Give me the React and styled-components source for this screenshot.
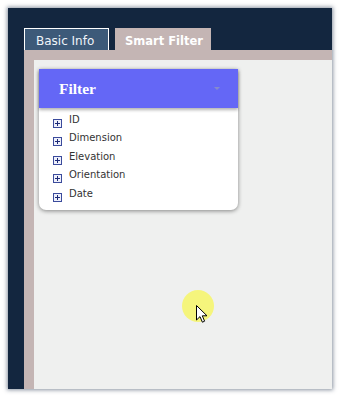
import React from "react";
import styled, { createGlobalStyle } from "styled-components";

const GlobalStyle = createGlobalStyle`
  html, body {
    margin: 0;
    padding: 0;
    background: #ffffff;
  }
  #root {
    width: 340px;
    height: 395px;
    overflow: hidden;
  }
`;

const Window = styled.div`
  position: relative;
  margin: 8px 0 0 8px;
  width: 324px;
  height: 381px;
  background: #13263f;
  box-shadow: 0 0 4px 1px rgba(19, 38, 63, 0.5);
  display: flex;
  flex-direction: column;
  padding: 20px 0 0 16px;
  box-sizing: border-box;
`;

const TabBar = styled.div`
  display: flex;
  gap: 6px;
  height: 22px;
`;

const Tab = styled.div`
  box-sizing: border-box;
  width: ${(p) => p.width};
  height: 22px;
  display: flex;
  align-items: flex-end;
  padding: 0 0 2px ${(p) => p.pad || "11px"};
  font-family: "DejaVu Sans", Verdana, sans-serif;
  font-size: ${(p) => (p.active ? "11.5px" : "12px")};
  font-weight: ${(p) => (p.active ? 700 : 400)};
  color: ${(p) => (p.active ? "#ffffff" : "#f0f5fa")};
  background: ${(p) => (p.active ? "#c4b5b4" : "#3d5a79")};
  border: ${(p) => (p.active ? "none" : "1px solid #ffffff")};
  border-bottom: none;
`;

const Panel = styled.div`
  flex: 1;
  background: #c4b5b4;
  padding: 10px 0 0 10px;
  display: flex;
`;

const Canvas = styled.div`
  position: relative;
  flex: 1;
  background: #eff0ef;
  padding: 9px 0 0 5px;
`;

const Card = styled.div`
  width: 199px;
  background: #ffffff;
  border-radius: 0 0 7px 7px;
  box-shadow: 0 1px 4px rgba(0, 0, 0, 0.45);
  padding-bottom: 4px;
`;

const CardHeader = styled.div`
  height: 39px;
  background: #6467f6;
  box-shadow: 0 2px 3px rgba(0, 0, 0, 0.3);
  display: flex;
  align-items: center;
  justify-content: space-between;
  padding: 0 18px 0 20px;
  font-family: "Liberation Serif", "Times New Roman", serif;
  font-weight: 700;
  font-size: 15.5px;
  color: #ffffff;
`;

const Caret = styled.span`
  width: 0;
  height: 0;
  border-left: 3px solid transparent;
  border-right: 3px solid transparent;
  border-top: 3px solid #858bcc;
`;

const List = styled.ul`
  list-style: none;
  margin: 0;
  padding: 6px 0 0 14px;
`;

const Item = styled.li`
  display: flex;
  align-items: flex-start;
  gap: 7px;
  height: 18.4px;
  font-family: "DejaVu Sans", Tahoma, sans-serif;
  font-size: 10px;
  color: #333333;
  line-height: 11px;
`;

const Expander = styled.svg`
  margin-top: 5px;
  flex-shrink: 0;
`;

const Highlight = styled.div`
  position: absolute;
  left: 148px;
  top: 230px;
  width: 32px;
  height: 32px;
  border-radius: 50%;
  background: #f5f57c;
`;

const Pointer = styled.svg`
  position: absolute;
  left: 162px;
  top: 245px;
`;

const Plus = () => (
  <Expander width="9" height="9" viewBox="0 0 9 9">
    <rect x="0.5" y="0.5" width="8" height="8" fill="#eef0fb" stroke="#3b4b9c" />
    <path d="M2 4.5h5M4.5 2v5" stroke="#1c2a78" strokeWidth="1" />
  </Expander>
);

const fields = ["ID", "Dimension", "Elevation", "Orientation", "Date"];

export default function App() {
  return (
    <>
      <GlobalStyle />
      <Window>
        <TabBar>
          <Tab width="85px">Basic Info</Tab>
          <Tab width="96px" active pad="10px">
            Smart Filter
          </Tab>
        </TabBar>
        <Panel>
          <Canvas>
            <Card>
              <CardHeader>
                Filter
                <Caret />
              </CardHeader>
              <List>
                {fields.map((f) => (
                  <Item key={f}>
                    <Plus />
                    {f}
                  </Item>
                ))}
              </List>
            </Card>
            <Highlight />
            <Pointer width="12" height="19" viewBox="0 0 12 19">
              <path
                d="M0.5 0.5 L0.5 15 L4 11.6 L6.4 17.2 L8.6 16.2 L6.3 10.8 L11 10.8 Z"
                fill="#ffffff"
                stroke="#000000"
                strokeWidth="1"
                strokeLinejoin="miter"
              />
            </Pointer>
          </Canvas>
        </Panel>
      </Window>
    </>
  );
}
